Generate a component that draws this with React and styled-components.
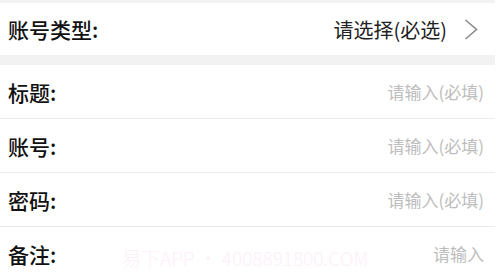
import React from 'react';
import styled, { createGlobalStyle } from 'styled-components';

const GlobalStyle = createGlobalStyle`
  html, body {
    margin: 0;
    padding: 0;
    background: #ffffff;
  }
  body {
    font-family: "Noto Sans CJK SC", "Noto Sans", sans-serif;
  }
`;

const Page = styled.div`
  position: relative;
  width: 495px;
  height: 279px;
  overflow: hidden;
  background-color: #f2f2f2;
  padding-top: 3px;
  box-sizing: border-box;
`;

const Section = styled.div`
  background-color: #ffffff;
  & + & {
    margin-top: 10px;
  }
`;

const Row = styled.div`
  display: flex;
  align-items: center;
  height: ${props => props.height || 53}px;
  padding: 0 ${props => props.padRight || 11}px 0 8px;
  border-bottom: ${props => (props.divider ? '1px solid #ebebeb' : 'none')};
`;

const Label = styled.div`
  flex: none;
  font-size: 21px;
  font-weight: 500;
  color: #111111;
`;

const Value = styled.div`
  flex: 1;
  text-align: right;
  font-size: 20px;
  color: #222222;
`;

const Placeholder = styled.div`
  flex: 1;
  text-align: right;
  font-size: 17px;
  color: #bdbdbd;
`;

const Chevron = styled.svg`
  flex: none;
  width: 14px;
  height: 21px;
  margin-left: 17px;
`;

const Watermark = styled.div`
  position: absolute;
  left: 122px;
  top: 244px;
  font-size: 19px;
  font-weight: 300;
  color: #fdeffa;
  white-space: nowrap;
  pointer-events: none;
`;

const fields = [
  { label: '标题:', hint: '请输入(必填)' },
  { label: '账号:', hint: '请输入(必填)' },
  { label: '密码:', hint: '请输入(必填)' },
  { label: '备注:', hint: '请输入' },
];

export default function App() {
  return (
    <>
      <GlobalStyle />
      <Page>
        <Section>
          <Row height={52} padRight={17}>
            <Label>账号类型:</Label>
            <Value>请选择(必选)</Value>
            <Chevron viewBox="0 0 14 21">
              <polyline points="1.5,1 12.5,10.5 1.5,20" fill="none" stroke="#8a8a8a" strokeWidth="1.6" />
            </Chevron>
          </Row>
        </Section>
        <Section>
          {fields.map((f, i) => (
            <Row key={i} divider={i < fields.length - 1}>
              <Label>{f.label}</Label>
              <Placeholder>{f.hint}</Placeholder>
            </Row>
          ))}
        </Section>
        <Watermark>易下APP • 4008891800.COM</Watermark>
      </Page>
    </>
  );
}
